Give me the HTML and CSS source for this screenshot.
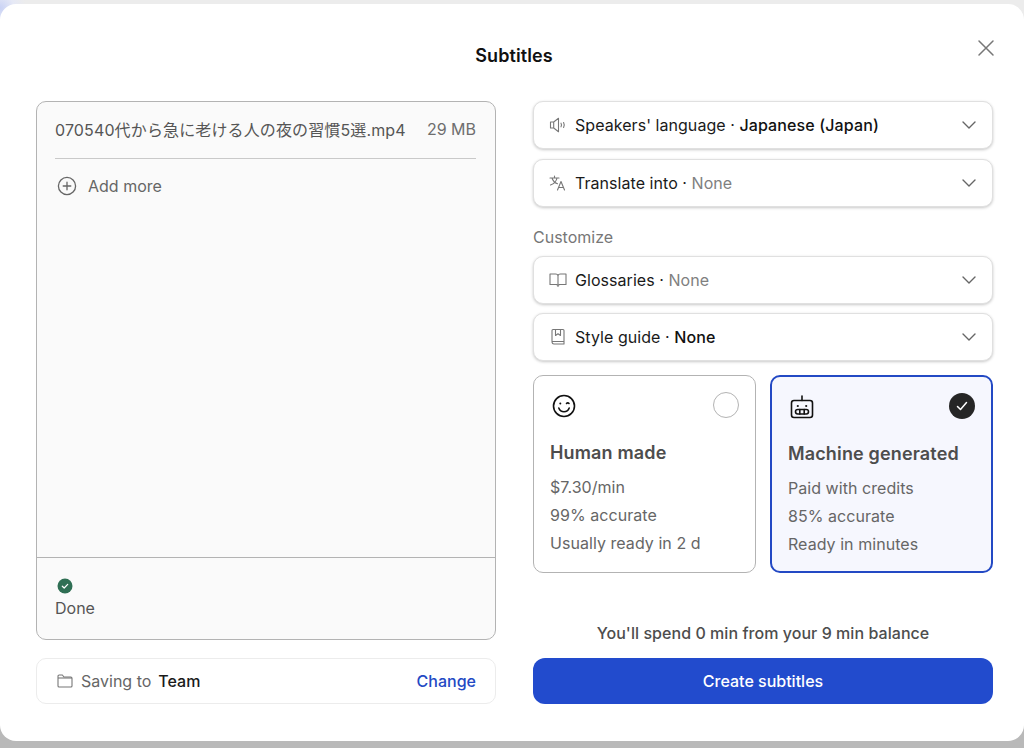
FILE: index.html
```html
<!DOCTYPE html>
<html lang="en">
<head>
<meta charset="utf-8">
<title>Subtitles</title>
<link rel="stylesheet" href="styles.css">
</head>
<body>
<div class="modal">
  <header class="modal-head">
    <h1 class="title">Subtitles</h1>
    <button class="close" aria-label="Close">
      <svg width="18" height="18" viewBox="0 0 18 18" fill="none" stroke="#777" stroke-width="1.5" stroke-linecap="round"><path d="M2 2l14 14M16 2L2 16"/></svg>
    </button>
  </header>
  <div class="columns">
    <section class="left">
      <div class="files">
        <div class="files-top">
          <div class="file-row">
            <span class="file-name">070540代から急に老ける人の夜の習慣5選.mp4</span>
            <span class="file-size">29 MB</span>
          </div>
          <div class="add-more">
            <svg width="20" height="20" viewBox="0 0 20 20" fill="none" stroke="#666" stroke-width="1.3" stroke-linecap="round"><circle cx="10" cy="10" r="8.6"/><path d="M10 6.2v7.6M6.2 10h7.6"/></svg>
            <span>Add more</span>
          </div>
        </div>
        <div class="status">
          <svg class="status-icon" width="16" height="16" viewBox="0 0 16 16"><circle cx="8" cy="8" r="7.5" fill="#2f6f54"/><path d="M5.3 8.2l1.9 1.8 3.5-3.6" fill="none" stroke="#fff" stroke-width="1.2" stroke-linecap="round" stroke-linejoin="round"/></svg>
          <span>Done</span>
        </div>
      </div>
      <div class="saving">
        <svg width="16" height="14" viewBox="0 0 16 14" fill="none" stroke="#777" stroke-width="1.1" stroke-linejoin="round"><path d="M1 12V2.4C1 1.6 1.5 1 2.2 1h3.2l1.5 2h6.9c.7 0 1.2.6 1.2 1.3V12c0 .6-.5 1-1.1 1H2.1C1.5 13 1 12.6 1 12z"/><path d="M1 4h14"/></svg>
        <span class="saving-label">Saving to</span>
        <span class="saving-team">Team</span>
        <a class="change">Change</a>
      </div>
    </section>
    <section class="right">
      <div class="select">
        <svg class="sel-icon" width="18" height="18" viewBox="0 0 18 18" fill="none" stroke="#777" stroke-width="1.1" stroke-linejoin="round" stroke-linecap="round"><path d="M1.5 6h3.2v6H1.5zM4.7 6L9.5 2.3v13.4L4.7 12"/><path d="M12 7.2c.6 1 .6 2.600 0 3.600M14.600 6.500c.8 1.500.8 3.500 0 5"/></svg>
        <span class="sel-text">Speakers' language · <span class="strong">Japanese (Japan)</span></span>
        <svg class="chev" width="14" height="8" viewBox="0 0 14 8" fill="none" stroke="#666" stroke-width="1.4" stroke-linecap="round" stroke-linejoin="round"><path d="M1 1l6 6 6-6"/></svg>
      </div>
      <div class="select gap-10">
        <svg class="sel-icon" width="18" height="18" viewBox="0 0 18 18" fill="none" stroke="#777" stroke-width="1.1" stroke-linejoin="round" stroke-linecap="round"><path d="M1 4h9M5.500 2v2M8 4c-.6 3.200-3 5.800-6.500 7M3 4c.8 2.800 2.800 4.800 5.500 5.800M8.500 16l3.500-8.500 3.500 8.500M9.800 13.500h4.500"/></svg>
        <span class="sel-text">Translate into · <span class="muted">None</span></span>
        <svg class="chev" width="14" height="8" viewBox="0 0 14 8" fill="none" stroke="#666" stroke-width="1.4" stroke-linecap="round" stroke-linejoin="round"><path d="M1 1l6 6 6-6"/></svg>
      </div>
      <div class="section-label">Customize</div>
      <div class="select">
        <svg class="sel-icon" width="18" height="18" viewBox="0 0 18 18" fill="none" stroke="#777" stroke-width="1.1" stroke-linejoin="round" stroke-linecap="round"><path d="M1 3h5.500C8 3 9 3.800 9 5v10.500M17 3h-5.500C10 3 9 3.800 9 5M1 3v10.500h6.500l1.500 1M17 3v10.500h-6.500l-1.500 1"/></svg>
        <span class="sel-text">Glossaries · <span class="muted">None</span></span>
        <svg class="chev" width="14" height="8" viewBox="0 0 14 8" fill="none" stroke="#666" stroke-width="1.4" stroke-linecap="round" stroke-linejoin="round"><path d="M1 1l6 6 6-6"/></svg>
      </div>
      <div class="select gap-9">
        <svg class="sel-icon" width="18" height="18" viewBox="0 0 18 18" fill="none" stroke="#777" stroke-width="1.1" stroke-linejoin="round" stroke-linecap="round"><path d="M3 13.500V2.500C3 2 3.400 1.500 4 1.500h10c.5 0 1 .5 1 1v11zM3 13.500c0 1.500.5 2.500 2 2.500h10v-2.500M6.500 1.500v6l2.500-1.800 2.500 1.800v-6"/></svg>
        <span class="sel-text">Style guide · <span class="strong">None</span></span>
        <svg class="chev" width="14" height="8" viewBox="0 0 14 8" fill="none" stroke="#666" stroke-width="1.4" stroke-linecap="round" stroke-linejoin="round"><path d="M1 1l6 6 6-6"/></svg>
      </div>
      <div class="cards">
        <article class="card">
          <div class="card-top">
            <svg class="card-icon" width="24" height="24" viewBox="0 0 24 24" fill="none" stroke="#111" stroke-width="1.6" stroke-linecap="round"><circle cx="12" cy="12" r="10.500"/><path d="M6.800 14c1 2.600 3 3.800 5.200 3.800s4.200-1.200 5.200-3.800"/><circle cx="8.300" cy="9.500" r="1" fill="#111" stroke="none"/><path d="M14.500 9.500c.7-.8 1.800-.8 2.500 0"/></svg>
            <span class="radio"></span>
          </div>
          <h2 class="card-title">Human made</h2>
          <p class="card-line">$7.30/min</p>
          <p class="card-line">99% accurate</p>
          <p class="card-line">Usually ready in 2 d</p>
        </article>
        <article class="card card-selected">
          <div class="card-top">
            <svg class="card-icon" width="24" height="24" viewBox="0 0 24 24" fill="none" stroke="#111" stroke-width="1.6" stroke-linecap="round" stroke-linejoin="round"><path d="M12 1v4.500"/><rect x="1.500" y="5.500" width="21" height="17" rx="2.500"/><circle cx="7.800" cy="11" r="1.100" fill="#111" stroke="none"/><circle cx="16.200" cy="11" r="1.100" fill="#111" stroke="none"/><rect x="5.500" y="14.500" width="13" height="4.500" rx="2.200"/><path d="M9.800 14.500v4.500M14.200 14.500v4.500"/></svg>
            <span class="radio-on">
              <svg width="12" height="10" viewBox="0 0 12 10" fill="none" stroke="#fff" stroke-width="1.5" stroke-linecap="round" stroke-linejoin="round"><path d="M1.500 5.500l3 3 6-7"/></svg>
            </span>
          </div>
          <h2 class="card-title">Machine generated</h2>
          <p class="card-line">Paid with credits</p>
          <p class="card-line">85% accurate</p>
          <p class="card-line">Ready in minutes</p>
        </article>
      </div>
      <p class="balance">You'll spend 0 min from your 9 min balance</p>
      <button class="create">Create subtitles</button>
    </section>
  </div>
</div>
</body>
</html>
```

FILE: styles.css
```css
* {
  box-sizing: border-box;
}
html, body {
  margin: 0;
  height: 748px;
  overflow: hidden;
}
body {
  background:
    radial-gradient(circle at 0 8px, #c9d2f5 0, #e6e9f6 14px, rgba(236, 236, 236, 0) 26px),
    linear-gradient(to bottom, #ececec 0, #ececec 8px, #b9b9b9 736px);
  font-family: Inter, "Noto Sans CJK JP", sans-serif;
  font-size: 16px;
  color: #1a1a1a;
  padding-top: 4px;
}
.modal {
  background: #fff;
  width: 1024px;
  height: 737px;
  border-radius: 16px;
  padding: 0 31px 0 36px;
}
.modal-head {
  position: relative;
  height: 97px;
  padding-top: 40px;
  padding-left: 4px;
  margin-right: -31px;
  margin-left: -36px;
  text-align: center;
}
.title {
  margin: 0;
  font-size: 18px;
  line-height: 24px;
  font-weight: 600;
  letter-spacing: 0.1px;
  color: #111;
}
.close {
  position: absolute;
  top: 35px;
  right: 29px;
  border: 0;
  background: none;
  padding: 0;
  width: 18px;
  height: 18px;
  display: block;
}
.columns {
  display: grid;
  grid-template-columns: 460px 460px;
  column-gap: 37px;
}
.left, .right {
  display: flex;
  flex-direction: column;
  height: 603px;
}
.files {
  height: 539px;
  border: 1px solid #b3b3b3;
  border-radius: 10px;
  background: #fafafa;
  display: flex;
  flex-direction: column;
}
.files-top {
  flex: 1;
  padding: 0 19px 0 18px;
}
.file-row {
  display: flex;
  justify-content: space-between;
  align-items: center;
  height: 57px;
  padding-bottom: 2px;
  border-bottom: 1px solid #c9c9c9;
  color: #555;
}
.file-name {
  letter-spacing: 0.13px;
}
.file-size {
  color: #6e6e6e;
}
.add-more {
  display: flex;
  align-items: center;
  gap: 11px;
  height: 54px;
  padding-left: 2px;
  color: #666;
}
.status {
  height: 82px;
  border-top: 1px solid #b3b3b3;
  padding: 20px 18px 0;
  color: #555;
  line-height: 22px;
}
.status-icon {
  display: block;
  margin: 0 0 3px 2px;
}
.saving {
  margin-top: 18px;
  height: 46px;
  border: 1px solid #ececec;
  border-radius: 10px;
  display: flex;
  align-items: center;
  padding: 0 19px 0 20px;
}
.saving-label {
  margin-left: 8px;
  color: #666;
}
.saving-team {
  margin-left: 7px;
  font-weight: 500;
  color: #1a1a1a;
}
.change {
  margin-left: auto;
  color: #2349c4;
  font-weight: 500;
}
.select {
  height: 48px;
  flex: none;
  border: 1px solid #e0e0e0;
  border-radius: 10px;
  background: #fff;
  box-shadow: 0 1px 3px rgba(0, 0, 0, 0.22);
  display: flex;
  align-items: center;
  padding: 0 16px 0 15px;
}
.gap-10 {
  margin-top: 10px;
}
.gap-9 {
  margin-top: 9px;
}
.sel-icon {
  flex: none;
}
.sel-text {
  margin-left: 8px;
  letter-spacing: 0.05px;
  color: #1a1a1a;
}
.strong {
  font-weight: 500;
  letter-spacing: 0.12px;
  color: #111;
}
.muted {
  color: #808080;
}
.chev {
  margin-left: auto;
}
.section-label {
  margin-top: 20px;
  height: 29px;
  line-height: 20px;
  color: #777;
}
.cards {
  margin-top: 14px;
  display: grid;
  grid-template-columns: 223px 223px;
  column-gap: 14px;
  height: 198px;
}
.card {
  border: 1px solid #b3b3b3;
  border-radius: 10px;
  background: #fff;
  padding: 16px 16px 0;
}
.card-selected {
  border: 2px solid #2349c4;
  background: #f6f7fe;
}
.card-top {
  display: flex;
  justify-content: space-between;
  align-items: center;
  height: 26px;
  padding-left: 2px;
}
.card-icon {
  margin-top: 2px;
}
.radio {
  width: 26px;
  height: 26px;
  border: 1px solid #b3b3b3;
  border-radius: 50%;
  background: #fff;
}
.radio-on {
  width: 26px;
  height: 26px;
  border-radius: 50%;
  background: #262626;
  display: flex;
  align-items: center;
  justify-content: center;
}
.card-title {
  margin: 22px 0 7px;
  font-size: 18px;
  line-height: 26px;
  font-weight: 600;
  letter-spacing: 0.15px;
  color: #4d4d4d;
}
.card-line {
  margin: 0;
  line-height: 28px;
  letter-spacing: 0.05px;
  color: #666;
}
.balance {
  margin: auto 0 13px;
  text-align: center;
  line-height: 24px;
  font-weight: 500;
  letter-spacing: 0.05px;
  color: #4d4d4d;
}
.create {
  height: 46px;
  flex: none;
  border: 0;
  border-radius: 12px;
  background: #224bcd;
  color: #fff;
  font: 500 16px Inter, sans-serif;
}
```
